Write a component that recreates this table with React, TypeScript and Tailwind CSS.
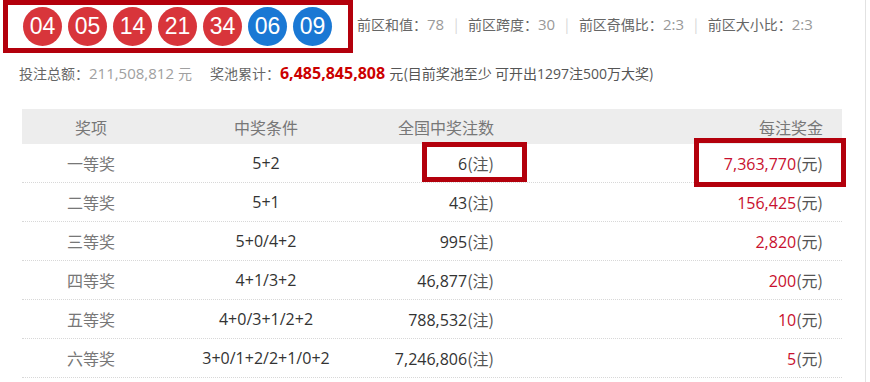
import React from "react";

const balls = [
  { n: "04", c: "bg-[#d8353b]" },
  { n: "05", c: "bg-[#d8353b]" },
  { n: "14", c: "bg-[#d8353b]" },
  { n: "21", c: "bg-[#d8353b]" },
  { n: "34", c: "bg-[#d8353b]" },
  { n: "06", c: "bg-[#1a78d4]" },
  { n: "09", c: "bg-[#1a78d4]" },
];

const stats = [
  { label: "前区和值：", value: "78" },
  { label: "前区跨度：", value: "30" },
  { label: "前区奇偶比：", value: "2:3" },
  { label: "前区大小比：", value: "2:3" },
];

const rows = [
  { name: "一等奖", cond: "5+2", count: "6", prize: "7,363,770" },
  { name: "二等奖", cond: "5+1", count: "43", prize: "156,425" },
  { name: "三等奖", cond: "5+0/4+2", count: "995", prize: "2,820" },
  { name: "四等奖", cond: "4+1/3+2", count: "46,877", prize: "200" },
  { name: "五等奖", cond: "4+0/3+1/2+2", count: "788,532", prize: "10" },
  { name: "六等奖", cond: "3+0/1+2/2+1/0+2", count: "7,246,806", prize: "5" },
];

const cjk = "font-['Noto_Sans_CJK_SC',sans-serif]";
const num = "font-['Open_Sans','Noto_Sans_CJK_SC',sans-serif]";

export default function App() {
  return (
    <div className={`relative w-[870px] h-[382px] bg-white overflow-hidden ${cjk}`}>
      {/* right page edge */}
      <div className="absolute right-[4px] top-0 bottom-0 w-px bg-[#e2e2e2]" />

      {/* balls row + stats */}
      <div className="flex items-center h-[53px]">
        <div className="ml-[3px] w-[350px] h-[53px] border-[5px] border-[#b3000c] flex items-center pl-[15px] gap-[6px]">
          {balls.map((b, i) => (
            <div
              key={i}
              className={`w-[39px] h-[39px] rounded-full ${b.c} text-white flex items-center justify-center font-['Liberation_Sans',sans-serif] text-[23px] leading-none`}
            >
              {b.n}
            </div>
          ))}
        </div>
        <div className="ml-[4px] flex items-center text-[14px] text-[#666] mt-[-5px]">
          {stats.map((s, i) => (
            <React.Fragment key={i}>
              {i > 0 && <span className="mx-[10px] text-[#d5d5d5]">|</span>}
              <span>{s.label}</span>
              <span className={`${num} text-[#999] text-[15px]`}>{s.value}</span>
            </React.Fragment>
          ))}
        </div>
      </div>

      {/* totals */}
      <div className="flex items-baseline pl-[19px] mt-[8px] text-[14px] text-[#666] h-[22px]">
        <span>投注总额：</span>
        <span className={`${num} text-[#a0a0a0] text-[15px]`}>211,508,812</span>
        <span className="text-[#a0a0a0] ml-[4px]">元</span>
        <span className="ml-[18px]">奖池累计：</span>
        <span className={`${num} text-[#cc0000] font-bold text-[16px]`}>6,485,845,808</span>
        <span className="ml-[4px] text-[#555]">元(目前奖池至少 可开出<span className={num}>1297</span>注<span className={num}>500</span>万大奖)</span>
      </div>

      {/* table */}
      <div className="relative ml-[22px] mt-[26px] w-[820px]">
        <div className="grid grid-cols-[138px_212px_132px_1fr] h-[35px] bg-[#ededed] items-center text-[16px] text-[#777]">
          <div className="text-center">奖项</div>
          <div className="text-center">中奖条件</div>
          <div className="text-right pr-[10px]">全国中奖注数</div>
          <div className="text-right pr-[19px]">每注奖金</div>
        </div>
        {rows.map((r, i) => (
          <div
            key={i}
            className="grid grid-cols-[138px_212px_132px_1fr] h-[39px] items-center border-b border-dotted border-[#d8d8d8] text-[16px]"
          >
            <div className="text-center text-[#777]">{r.name}</div>
            <div className={`text-center ${num} text-[#333]`}>{r.cond}</div>
            <div className={`text-right pr-[10px] ${num} text-[#333] whitespace-nowrap`}>
              {r.count}
              <span className={`${cjk} text-[#555]`}>(注)</span>
            </div>
            <div className={`text-right pr-[19px] ${num} whitespace-nowrap`}>
              <span className="text-[#c8102e]">{r.prize}</span>
              <span className={`${cjk} text-[#555]`}>(元)</span>
            </div>
          </div>
        ))}

        {/* highlight boxes */}
        <div className="absolute left-[400px] top-[33px] w-[105px] h-[40px] border-[5px] border-[#b3000c]" />
        <div className="absolute left-[672px] top-[29px] w-[152px] h-[49px] border-[5px] border-[#b3000c]" />
      </div>
    </div>
  );
}
